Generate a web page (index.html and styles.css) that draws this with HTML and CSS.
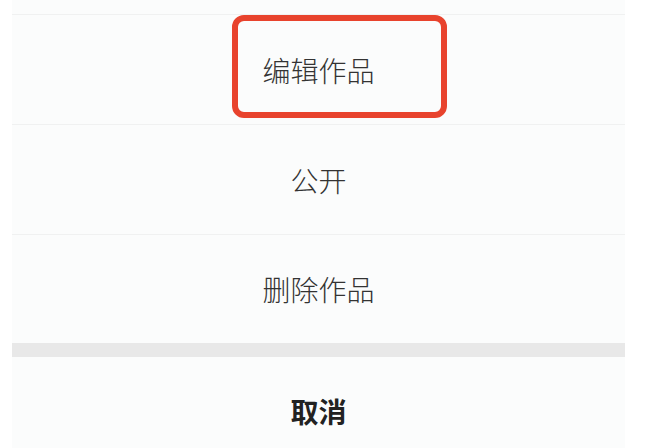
FILE: index.html
```html
<!DOCTYPE html>
<html lang="zh-CN">
<head>
<meta charset="utf-8">
<link rel="stylesheet" href="styles.css">
</head>
<body>
<div class="sheet">
  <div class="peek"></div>
  <div class="item highlighted">
    <span class="label">编辑作品</span>
    <div class="mark"></div>
  </div>
  <div class="item">
    <span class="label">公开</span>
  </div>
  <div class="item last">
    <span class="label">删除作品</span>
  </div>
  <div class="gap"></div>
  <div class="cancel">
    <span class="label bold">取消</span>
  </div>
</div>
</body>
</html>
```
FILE: styles.css
```css
html, body {
  margin: 0;
  padding: 0;
  background: #ffffff;
  height: 448px;
  overflow: hidden;
}
body {
  font-family: "Noto Sans CJK SC", "Noto Sans", sans-serif;
  color: #333333;
}
.sheet {
  width: 613px;
  margin-left: 12px;
  background: #fbfcfc;
  display: flex;
  flex-direction: column;
}
.peek {
  height: 14px;
}
.item {
  position: relative;
  height: 109px;
  border-top: 1px solid #f0f1f1;
  display: flex;
  align-items: center;
  justify-content: center;
}
.item.last {
  height: 108px;
}
.label {
  font-size: 28px;
  font-weight: 300;
  line-height: 1;
  letter-spacing: 0;
}
.bold {
  font-weight: 700;
  color: #222222;
}
.mark {
  position: absolute;
  left: 220px;
  top: 0;
  width: 215px;
  height: 103px;
  box-sizing: border-box;
  border: 6px solid #e8432d;
  border-radius: 12px;
}
.gap {
  height: 14px;
  background: #e8e8e8;
}
.cancel {
  height: 108px;
  display: flex;
  align-items: center;
  justify-content: center;
}
```
